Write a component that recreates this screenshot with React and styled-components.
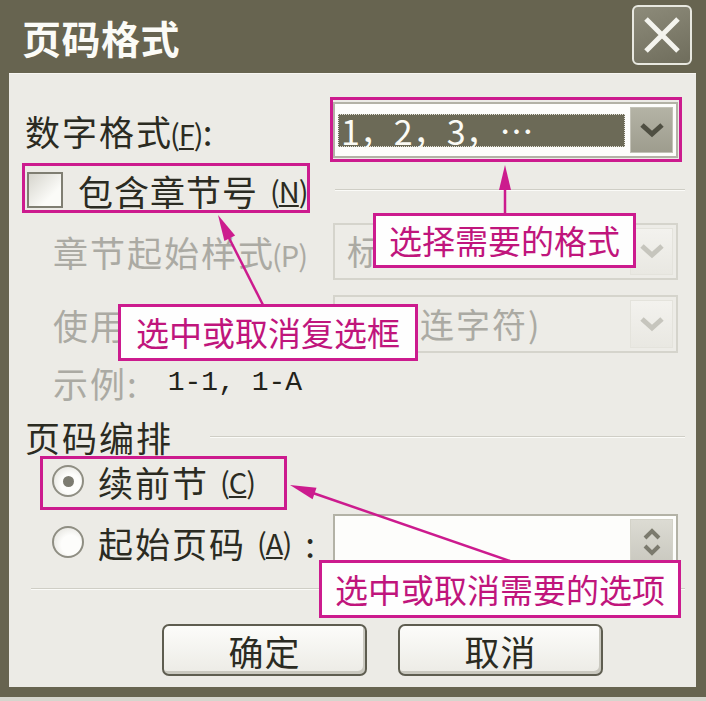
import React from "react";
import styled, { createGlobalStyle } from "styled-components";

const GlobalStyle = createGlobalStyle`
  html, body {
    margin: 0;
    padding: 0;
    background: #d6d6ce;
  }
  body {
    font-family: "Noto Sans CJK SC", "Noto Sans", sans-serif;
  }
`;

const MAGENTA = "#cc1b8e";

const Chevron = ({ color = "#4f4f42" }) => (
  <svg width="26" height="16" viewBox="0 0 26 16">
    <polyline
      points="3,3 13,12 23,3"
      fill="none"
      stroke={color}
      strokeWidth="5"
      strokeLinejoin="miter"
    />
  </svg>
);

const SpinArrows = () => (
  <svg width="20" height="34" viewBox="0 0 20 34">
    <polyline points="3,13 10,6 17,13" fill="none" stroke="#7b7a6e" strokeWidth="4" />
    <polyline points="3,21 10,28 17,21" fill="none" stroke="#7b7a6e" strokeWidth="4" />
  </svg>
);

const CloseIcon = () => (
  <svg width="38" height="38" viewBox="0 0 38 38">
    <path d="M3 3 L35 35 M35 3 L3 35" stroke="#f4f4ee" strokeWidth="5" />
  </svg>
);

const App = () => {
  return (
    <Page>
      <GlobalStyle />
      <Frame>
        <TitleBar>
          <Title>页码格式</Title>
          <CloseButton>
            <CloseIcon />
          </CloseButton>
        </TitleBar>
        <Body>
          <FieldRow $h={56}>
            <Label>
              数字格式<Key>(<u>F</u>)</Key>:
            </Label>
            <Combo $h={56}>
              <Selected>1，2，3，…</Selected>
              <DropButton>
                <Chevron />
              </DropButton>
            </Combo>
          </FieldRow>

          <FieldRow $h={64}>
            <CheckLabel>
              <CheckBox />
              包含章节号<Key>(<u>N</u>)</Key>
            </CheckLabel>
            <Groove />
          </FieldRow>

          <FieldRow $h={58}>
            <Label $indent $disabled>
              章节起始样式<Key>(P)</Key>
            </Label>
            <Combo $h={57} $disabled>
              <ComboText $disabled>标题 1</ComboText>
              <DropButton $disabled>
                <Chevron color="#c6c5bd" />
              </DropButton>
            </Combo>
          </FieldRow>

          <FieldRow $h={58} $mt={15}>
            <Label $indent $disabled>
              使用分隔符<Key>(E)</Key>:
            </Label>
            <Combo $h={58} $disabled>
              <ComboText $disabled>-　&nbsp;(连字符)</ComboText>
              <DropButton $disabled>
                <Chevron color="#c6c5bd" />
              </DropButton>
            </Combo>
          </FieldRow>

          <PlainRow $h={58}>
            <Label $indent $disabled>
              示例:
            </Label>
            <Sample>1-1, 1-A</Sample>
          </PlainRow>

          <PlainRow $h={50}>
            <Label>页码编排</Label>
            <GroupLine />
          </PlainRow>

          <PlainRow $h={40}>
            <RadioLabel>
              <Radio $checked />
              续前节<Key>(<u>C</u>)</Key>
            </RadioLabel>
          </PlainRow>

          <FieldRow $h={58} $mt={12}>
            <RadioLabel>
              <Radio />
              起始页码<Key>(<u>A</u>)</Key>:
            </RadioLabel>
            <SpinBox>
              <SpinButton>
                <SpinArrows />
              </SpinButton>
            </SpinBox>
          </FieldRow>

          <Separator />

          <ButtonRow>
            <DialogButton>确定</DialogButton>
            <DialogButton>取消</DialogButton>
          </ButtonRow>
        </Body>
      </Frame>

      <Highlight $x={330} $y={97} $w={352} $h={65} />
      <Highlight $x={22} $y={163} $w={288} $h={50} />
      <Highlight $x={40} $y={456} $w={247} $h={54} />

      <Arrows width="706" height="701" viewBox="0 0 706 701">
        <g stroke={MAGENTA} strokeWidth="2.5" fill={MAGENTA}>
          <line x1="505" y1="213" x2="505" y2="186" />
          <polygon points="505,165 499,190 511,190" stroke="none" />
          <line x1="263" y1="305" x2="226" y2="232" />
          <polygon points="218,215 235.1,235.5 224.4,240.9" stroke="none" />
          <line x1="510" y1="561" x2="310" y2="492" />
          <polygon points="290,485 316.5,487.8 312.6,499.2" stroke="none" />
        </g>
      </Arrows>

      <Callout $x={373} $y={213} $w={263} $h={55}>
        选择需要的格式
      </Callout>
      <Callout $x={118} $y={304} $w={300} $h={57}>
        选中或取消复选框
      </Callout>
      <Callout $x={319} $y={560} $w={362} $h={58}>
        选中或取消需要的选项
      </Callout>
    </Page>
  );
};

const Page = styled.div`
  position: relative;
  width: 706px;
  height: 701px;
  overflow: hidden;
`;

const Frame = styled.div`
  width: 706px;
  height: 697px;
  box-sizing: border-box;
  background: #676450;
  padding: 0 10px 10px 9px;
  display: flex;
  flex-direction: column;
`;

const TitleBar = styled.div`
  height: 73px;
  flex-shrink: 0;
  display: flex;
  align-items: center;
  justify-content: space-between;
  padding: 0 4px 0 13px;
`;

const Title = styled.div`
  color: #fbfbf7;
  font-size: 39px;
  font-weight: 700;
  letter-spacing: 0.5px;
  line-height: 1;
  margin-top: 2px;
`;

const CloseButton = styled.div`
  width: 60px;
  height: 60px;
  box-sizing: border-box;
  margin-top: -3px;
  border: 2px solid #e8e8e0;
  border-radius: 6px;
  background: linear-gradient(160deg, #8d8b7a, #6f6d5c);
  display: flex;
  align-items: center;
  justify-content: center;
`;

const Body = styled.div`
  flex: 1;
  background: #ecebe6;
  border-top: 1px solid #f7f6f2;
  display: flex;
  flex-direction: column;
  padding: 28px 18px 0 16px;
  color: #2b2b22;
`;

const FieldRow = styled.div`
  display: grid;
  grid-template-columns: 1fr 345px;
  align-items: center;
  height: ${(p) => p.$h}px;
  margin-top: ${(p) => p.$mt || 0}px;
  flex-shrink: 0;
`;

const PlainRow = styled.div`
  display: flex;
  align-items: center;
  height: ${(p) => p.$h}px;
  flex-shrink: 0;
`;

const Label = styled.div`
  font-size: 35px;
  letter-spacing: 2px;
  line-height: 1;
  white-space: nowrap;
  padding-left: ${(p) => (p.$indent ? 28 : 0)}px;
  color: ${(p) => (p.$disabled ? "#abaaa3" : "#2b2b22")};
`;

const Key = styled.span`
  font-size: 29px;
  letter-spacing: -1px;
  margin: 0 0 0 -3px;
`;

const Combo = styled.div`
  height: ${(p) => p.$h}px;
  box-sizing: border-box;
  border: 2px solid ${(p) => (p.$disabled ? "#d5d4cc" : "#b3b2a6")};
  background: ${(p) => (p.$disabled ? "#edece7" : "#fdfdfb")};
  display: flex;
  align-items: center;
  padding: 0 3px 0 3px;
  gap: 5px;
`;

const Selected = styled.div`
  flex: 1;
  height: 33px;
  box-sizing: border-box;
  background: #6c6a57;
  border: 1px dotted #e2e1d8;
  color: #fbfbf5;
  font-size: 34px;
  line-height: 31px;
  padding-left: 2px;
  white-space: nowrap;
`;

const ComboText = styled.div`
  flex: 1;
  font-size: 34px;
  line-height: 1.2;
  letter-spacing: 2px;
  padding-left: 9px;
  white-space: nowrap;
  color: ${(p) => (p.$disabled ? "#abaaa3" : "#2b2b22")};
`;

const DropButton = styled.div`
  width: 43px;
  height: calc(100% - 6px);
  box-sizing: border-box;
  border: 1px solid ${(p) => (p.$disabled ? "#e4e3dc" : "#c3c2b7")};
  background: ${(p) =>
    p.$disabled
      ? "linear-gradient(#f3f2ee, #e9e8e2)"
      : "linear-gradient(#b4b3a5, #9e9d8e)"};
  display: flex;
  align-items: center;
  justify-content: center;
`;

const CheckLabel = styled.div`
  display: flex;
  align-items: center;
  gap: 15px;
  padding-left: 2px;
  font-size: 35px;
  letter-spacing: 1px;
  line-height: 1;
  white-space: nowrap;
`;

const CheckBox = styled.div`
  width: 36px;
  height: 36px;
  box-sizing: border-box;
  border: 2px solid #7f7e72;
  background: linear-gradient(135deg, #d6d5cd, #fbfbf8 70%);
  flex-shrink: 0;
`;

const Groove = styled.div`
  height: 0;
  border-top: 1px solid #cfcec6;
  border-bottom: 1px solid #fbfbf8;
  margin: 0 -7px 0 2px;
`;

const Sample = styled.div`
  font-family: "Liberation Mono", "DejaVu Sans Mono", monospace;
  font-size: 28px;
  color: #22221a;
  margin-left: 29px;
`;

const GroupLine = styled.div`
  flex: 1;
  height: 0;
  border-top: 1px solid #cfcec6;
  border-bottom: 1px solid #fbfbf8;
  margin: 2px -7px 0 37px;
`;

const RadioLabel = styled.div`
  display: flex;
  align-items: center;
  gap: 14px;
  padding-left: 27px;
  font-size: 35px;
  letter-spacing: 2px;
  line-height: 1;
  white-space: nowrap;
`;

const Radio = styled.div`
  width: 32px;
  height: 32px;
  box-sizing: border-box;
  border-radius: 50%;
  border: 2px solid #8f8e83;
  background: radial-gradient(circle at 60% 60%, #fdfdfb 40%, #dddcd5);
  display: flex;
  align-items: center;
  justify-content: center;
  flex-shrink: 0;

  &::after {
    content: "";
    width: 11px;
    height: 11px;
    border-radius: 50%;
    background: ${(p) => (p.$checked ? "#7c7b70" : "transparent")};
  }
`;

const SpinBox = styled.div`
  height: 56px;
  box-sizing: border-box;
  border: 2px solid #b3b2a6;
  background: #fdfdfb;
  display: flex;
  justify-content: flex-end;
  padding: 3px 3px;
`;

const SpinButton = styled.div`
  width: 43px;
  box-sizing: border-box;
  border: 1px solid #d3d2c8;
  background: linear-gradient(#dcdbd3, #c9c8bf);
  display: flex;
  align-items: center;
  justify-content: center;
`;

const Separator = styled.div`
  margin: 17px -7px 0 6px;
  height: 0;
  border-top: 1px solid #cfcec6;
  border-bottom: 1px solid #fbfbf8;
  flex-shrink: 0;
`;

const ButtonRow = styled.div`
  display: flex;
  gap: 31px;
  margin: 34px 0 0 137px;
`;

const DialogButton = styled.div`
  width: 205px;
  height: 52px;
  box-sizing: border-box;
  border: 2px solid #5e5d50;
  border-radius: 7px;
  background: linear-gradient(#fcfcfa, #ecebe5);
  box-shadow: inset -2px -3px 0 #c9c8bf;
  display: flex;
  align-items: center;
  justify-content: center;
  font-size: 35px;
  letter-spacing: 1px;
  color: #2b2b22;
  line-height: 1;
`;

const Highlight = styled.div`
  position: absolute;
  left: ${(p) => p.$x}px;
  top: ${(p) => p.$y}px;
  width: ${(p) => p.$w}px;
  height: ${(p) => p.$h}px;
  box-sizing: border-box;
  border: 3px solid ${MAGENTA};
  pointer-events: none;
`;

const Arrows = styled.svg`
  position: absolute;
  left: 0;
  top: 0;
  pointer-events: none;
`;

const Callout = styled.div`
  position: absolute;
  left: ${(p) => p.$x}px;
  top: ${(p) => p.$y}px;
  width: ${(p) => p.$w}px;
  height: ${(p) => p.$h}px;
  box-sizing: border-box;
  border: 3px solid ${MAGENTA};
  background: #fefefe;
  color: #c0157c;
  font-size: 33px;
  line-height: 1;
  display: flex;
  align-items: center;
  justify-content: center;
  white-space: nowrap;
`;

export default App;
